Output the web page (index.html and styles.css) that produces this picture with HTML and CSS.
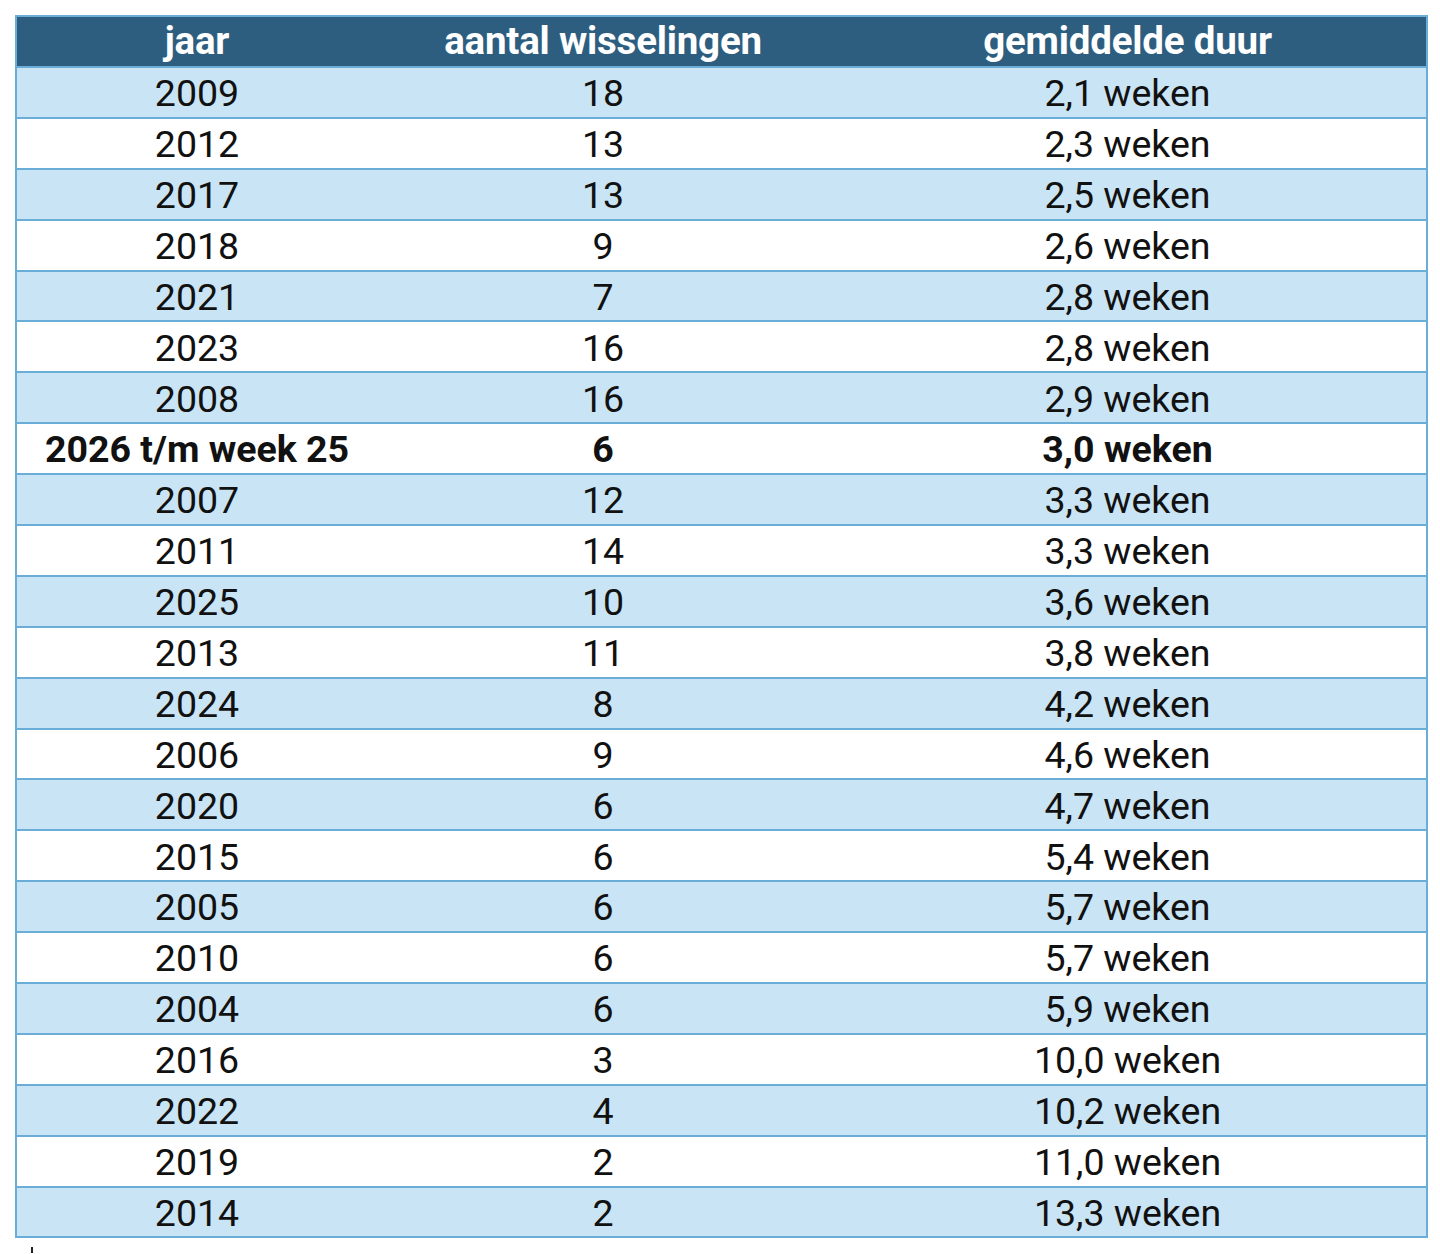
FILE: index.html
```html
<!DOCTYPE html>
<html lang="nl">
<head>
<meta charset="utf-8">
<title>Wisselingen</title>
<link rel="stylesheet" href="styles.css">
</head>
<body>
<div class="wrap">
<table class="tbl">
<thead>
<tr><th>jaar</th><th>aantal wisselingen</th><th>gemiddelde duur</th></tr>
</thead>
<tbody>
<tr><td>2009</td><td>18</td><td>2,1 weken</td></tr>
<tr><td>2012</td><td>13</td><td>2,3 weken</td></tr>
<tr><td>2017</td><td>13</td><td>2,5 weken</td></tr>
<tr><td>2018</td><td>9</td><td>2,6 weken</td></tr>
<tr><td>2021</td><td>7</td><td>2,8 weken</td></tr>
<tr><td>2023</td><td>16</td><td>2,8 weken</td></tr>
<tr><td>2008</td><td>16</td><td>2,9 weken</td></tr>
<tr class="bold"><td>2026 t/m week 25</td><td>6</td><td>3,0 weken</td></tr>
<tr><td>2007</td><td>12</td><td>3,3 weken</td></tr>
<tr><td>2011</td><td>14</td><td>3,3 weken</td></tr>
<tr><td>2025</td><td>10</td><td>3,6 weken</td></tr>
<tr><td>2013</td><td>11</td><td>3,8 weken</td></tr>
<tr><td>2024</td><td>8</td><td>4,2 weken</td></tr>
<tr><td>2006</td><td>9</td><td>4,6 weken</td></tr>
<tr><td>2020</td><td>6</td><td>4,7 weken</td></tr>
<tr><td>2015</td><td>6</td><td>5,4 weken</td></tr>
<tr><td>2005</td><td>6</td><td>5,7 weken</td></tr>
<tr><td>2010</td><td>6</td><td>5,7 weken</td></tr>
<tr><td>2004</td><td>6</td><td>5,9 weken</td></tr>
<tr><td>2016</td><td>3</td><td>10,0 weken</td></tr>
<tr><td>2022</td><td>4</td><td>10,2 weken</td></tr>
<tr><td>2019</td><td>2</td><td>11,0 weken</td></tr>
<tr><td>2014</td><td>2</td><td>13,3 weken</td></tr>
</tbody>
</table>
<div class="tick"></div>
</div>
</body>
</html>
```
FILE: styles.css
```css
html, body {
  margin: 0;
  padding: 0;
  background: #ffffff;
}
.wrap {
  padding: 15px 0 0 15px;
}
.tbl {
  width: 1413px;
  border-collapse: collapse;
  border: 2px solid #6aaed8;
  font-family: Roboto, "Liberation Sans", sans-serif;
  table-layout: fixed;
}
.tbl th:nth-child(1) { width: 360px; }
.tbl th:nth-child(2) { width: 452px; }
.tbl th {
  background: #2e5e7f;
  color: #ffffff;
  font-weight: 700;
  font-size: 38.5px;
  height: 49px;
  padding: 0;
  line-height: 1;
  border-bottom: 2px solid #6aaed8;
  letter-spacing: -0.2px;
}
.tbl td {
  font-size: 37.5px;
  color: #111111;
  text-align: center;
  height: 50.9px;
  padding: 3px 0 0 0;
  line-height: 1;
  border-bottom: 2px solid #6aaed8;
  box-sizing: border-box;
}
.tbl tbody tr:nth-child(odd) td {
  background: #c9e4f4;
}
.tbl tbody tr:nth-child(even) td {
  background: #ffffff;
}
.tbl tr.bold td {
  font-weight: 700;
}
.tick {
  width: 2px;
  height: 6px;
  background: #222;
  margin: 9px 0 0 16px;
}
```
